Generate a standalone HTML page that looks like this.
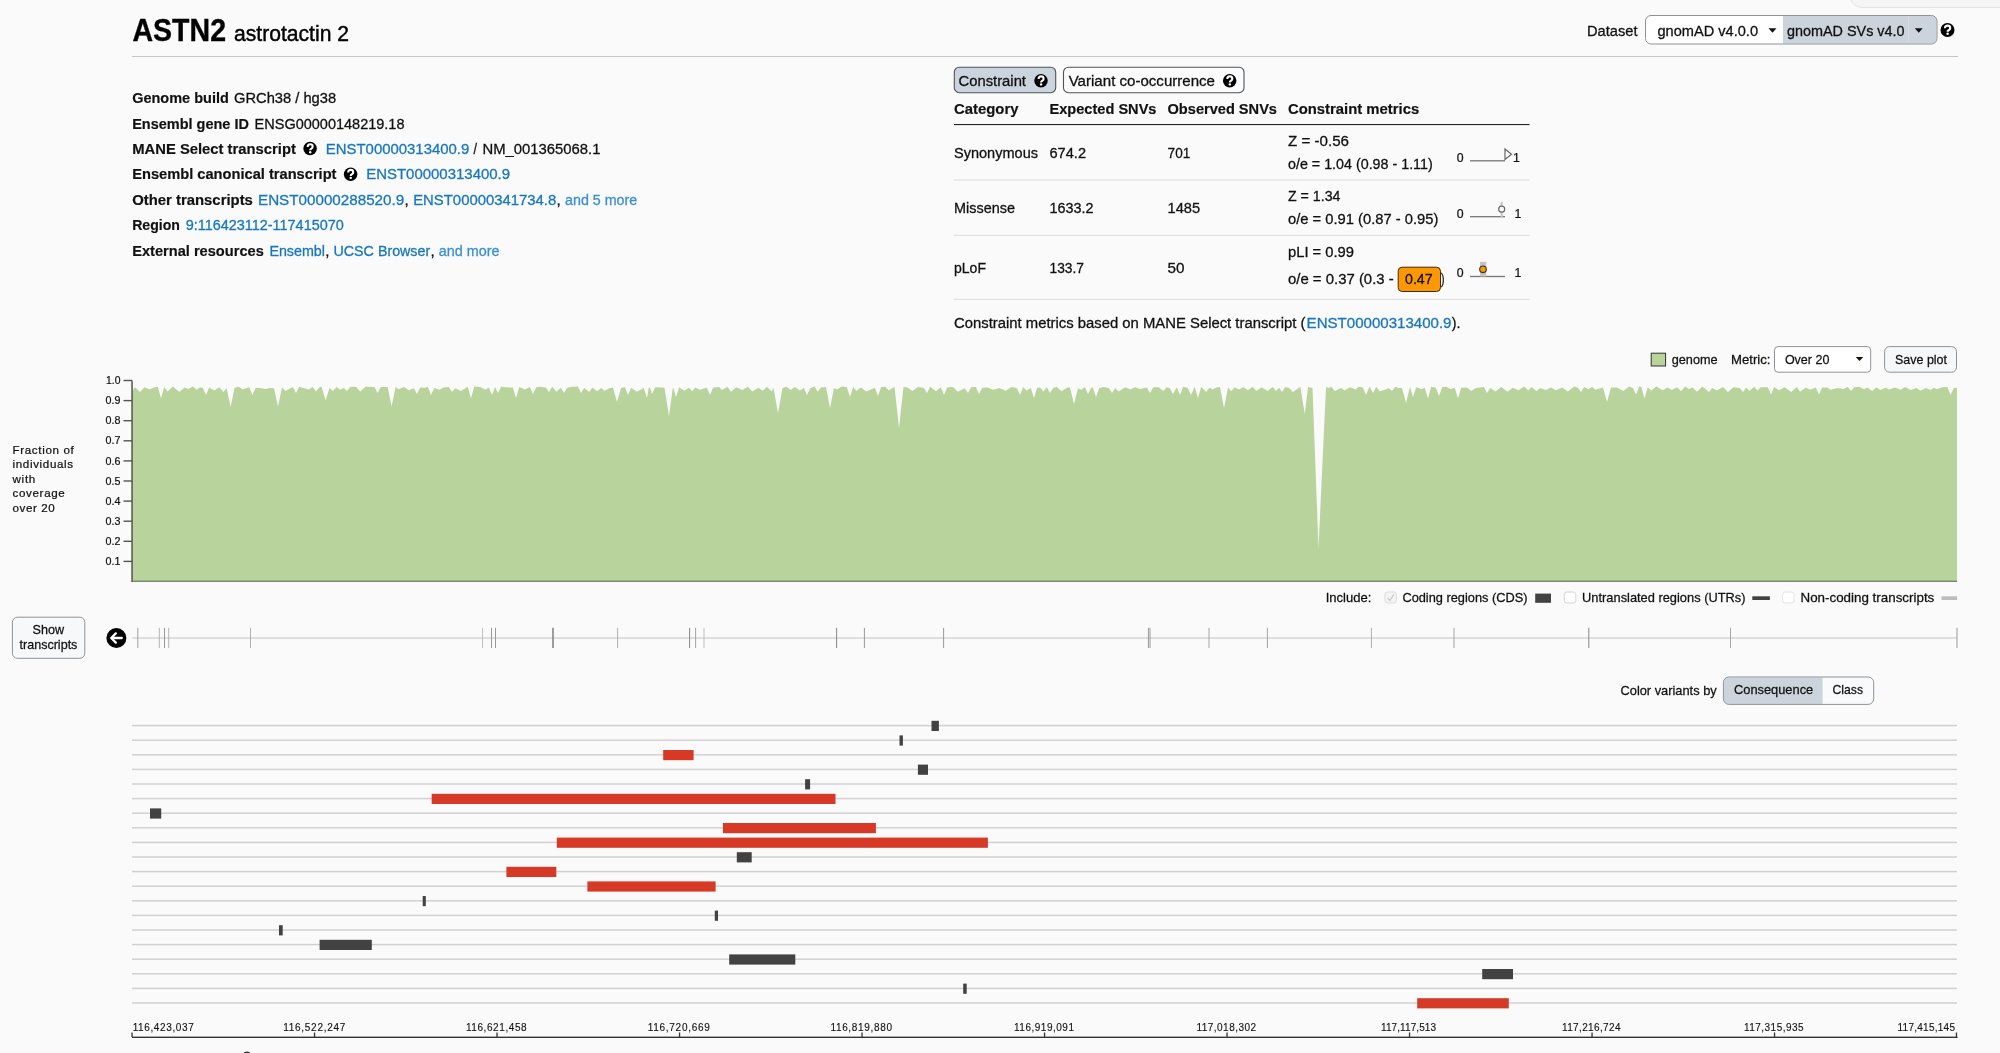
<!DOCTYPE html><html><head><meta charset="utf-8"><style>html,body{margin:0;padding:0;background:#fafafa;overflow:hidden;}svg{display:block;will-change:transform;}</style></head><body>
<svg width="2000" height="1053" viewBox="0 0 2000 1053" font-family='"Liberation Sans", sans-serif'>
<rect x="0" y="0" width="2000" height="1053" fill="#fafafa"/>
<rect x="1850" y="-30" width="200" height="37.5" rx="12" fill="#f5f5f5" stroke="#e4e4e4" stroke-width="1"/>
<text x="132.50" y="41.00" font-size="30.5" fill="#000" font-weight="bold" stroke="#000" stroke-width="0.361" textLength="93.50" lengthAdjust="spacingAndGlyphs">ASTN2</text>
<text x="234.00" y="41.00" font-size="22" fill="#000" stroke="#000" stroke-width="0.434" textLength="115.00" lengthAdjust="spacingAndGlyphs">astrotactin 2</text>
<rect x="132" y="56" width="1826" height="1" fill="#c6c6c6"/>
<text x="1587.00" y="36.25" font-size="15.2" fill="#111" stroke="#111" stroke-width="0.300" textLength="50.50" lengthAdjust="spacingAndGlyphs">Dataset</text>
<rect x="1645.5" y="15.5" width="291.5" height="28.5" rx="5.5" fill="#fff"/>
<path d="M1783,16 L1931.5,16 Q1936.5,16 1936.5,21 L1936.5,38.5 Q1936.5,43.5 1931.5,43.5 L1783,43.5 Z" fill="#cbd3dc"/>
<rect x="1908" y="16" width="1" height="27.5" fill="#d5dbe1"/>
<rect x="1645.5" y="15.5" width="291.5" height="28.5" rx="5.5" fill="none" stroke="#8e9398" stroke-width="1"/>
<text x="1657.50" y="36.25" font-size="15.2" fill="#111" stroke="#111" stroke-width="0.300" textLength="100.50" lengthAdjust="spacingAndGlyphs">gnomAD v4.0.0</text>
<path d="M1768.5,28.25 L1776.5,28.25 L1772.5,32.75 Z" fill="#111"/>
<text x="1787.00" y="36.25" font-size="15.2" fill="#111" stroke="#111" stroke-width="0.300" textLength="117.50" lengthAdjust="spacingAndGlyphs">gnomAD SVs v4.0</text>
<path d="M1914.75,28.25 L1922.75,28.25 L1918.75,32.75 Z" fill="#111"/>
<circle cx="1947.5" cy="30" r="7" fill="#000"/>
<path transform="translate(1947.5,30) scale(1.037)" d="M-2.4,-1.6 Q-2.4,-4.3 0.1,-4.3 Q2.6,-4.3 2.6,-2.0 Q2.6,-0.7 1.1,0.2 Q0.1,0.8 0.1,1.7" fill="none" stroke="#fff" stroke-width="2.1" stroke-linecap="butt"/>
<circle cx="1947.60" cy="33.84" r="1.24" fill="#fff"/>
<text x="132.20" y="102.90" font-size="15.2" fill="#111" font-weight="bold" stroke="#111" stroke-width="0.180" textLength="96.60" lengthAdjust="spacingAndGlyphs">Genome build</text>
<text x="234.10" y="102.90" font-size="15.2" fill="#111" stroke="#111" stroke-width="0.300" textLength="102.00" lengthAdjust="spacingAndGlyphs">GRCh38 / hg38</text>
<text x="132.20" y="128.60" font-size="15.2" fill="#111" font-weight="bold" stroke="#111" stroke-width="0.180" textLength="116.70" lengthAdjust="spacingAndGlyphs">Ensembl gene ID</text>
<text x="254.60" y="128.60" font-size="15.2" fill="#111" stroke="#111" stroke-width="0.300" textLength="149.90" lengthAdjust="spacingAndGlyphs">ENSG00000148219.18</text>
<text x="132.20" y="153.70" font-size="15.2" fill="#111" font-weight="bold" stroke="#111" stroke-width="0.180" textLength="163.70" lengthAdjust="spacingAndGlyphs">MANE Select transcript</text>
<circle cx="310.1" cy="148.6" r="6.75" fill="#000"/>
<path transform="translate(310.1,148.6) scale(1.000)" d="M-2.4,-1.6 Q-2.4,-4.3 0.1,-4.3 Q2.6,-4.3 2.6,-2.0 Q2.6,-0.7 1.1,0.2 Q0.1,0.8 0.1,1.7" fill="none" stroke="#fff" stroke-width="2.1" stroke-linecap="butt"/>
<circle cx="310.20" cy="152.30" r="1.20" fill="#fff"/>
<text x="325.80" y="153.70" font-size="15.2" fill="#1777c0" stroke="#1777c0" stroke-width="0.300" textLength="143.50" lengthAdjust="spacingAndGlyphs">ENST00000313400.9</text>
<text x="473.50" y="153.70" font-size="15.2" fill="#111" stroke="#111" stroke-width="0.300" textLength="3.50" lengthAdjust="spacingAndGlyphs">/</text>
<text x="482.50" y="153.70" font-size="15.2" fill="#111" stroke="#111" stroke-width="0.300" textLength="118.00" lengthAdjust="spacingAndGlyphs">NM_001365068.1</text>
<text x="132.20" y="179.40" font-size="15.2" fill="#111" font-weight="bold" stroke="#111" stroke-width="0.180" textLength="204.30" lengthAdjust="spacingAndGlyphs">Ensembl canonical transcript</text>
<circle cx="350.6" cy="174.2" r="6.75" fill="#000"/>
<path transform="translate(350.6,174.2) scale(1.000)" d="M-2.4,-1.6 Q-2.4,-4.3 0.1,-4.3 Q2.6,-4.3 2.6,-2.0 Q2.6,-0.7 1.1,0.2 Q0.1,0.8 0.1,1.7" fill="none" stroke="#fff" stroke-width="2.1" stroke-linecap="butt"/>
<circle cx="350.70" cy="177.90" r="1.20" fill="#fff"/>
<text x="366.20" y="179.40" font-size="15.2" fill="#1777c0" stroke="#1777c0" stroke-width="0.300" textLength="143.90" lengthAdjust="spacingAndGlyphs">ENST00000313400.9</text>
<text x="132.20" y="204.80" font-size="15.2" fill="#111" font-weight="bold" stroke="#111" stroke-width="0.180" textLength="120.70" lengthAdjust="spacingAndGlyphs">Other transcripts</text>
<text x="258.00" y="204.80" font-size="15.2" fill="#1777c0" stroke="#1777c0" stroke-width="0.300" textLength="146.20" lengthAdjust="spacingAndGlyphs">ENST00000288520.9</text>
<text x="404.60" y="204.80" font-size="15.2" fill="#111" stroke="#111" stroke-width="0.300">,</text>
<text x="413.20" y="204.80" font-size="15.2" fill="#1777c0" stroke="#1777c0" stroke-width="0.300" textLength="143.10" lengthAdjust="spacingAndGlyphs">ENST00000341734.8</text>
<text x="556.60" y="204.80" font-size="15.2" fill="#111" stroke="#111" stroke-width="0.300">,</text>
<text x="565.00" y="204.80" font-size="15.2" fill="#3a8fd6" stroke="#3a8fd6" stroke-width="0.300" textLength="72.20" lengthAdjust="spacingAndGlyphs">and 5 more</text>
<text x="132.20" y="230.00" font-size="15.2" fill="#111" font-weight="bold" stroke="#111" stroke-width="0.180" textLength="47.80" lengthAdjust="spacingAndGlyphs">Region</text>
<text x="185.70" y="230.00" font-size="15.2" fill="#1777c0" stroke="#1777c0" stroke-width="0.300" textLength="158.10" lengthAdjust="spacingAndGlyphs">9:116423112-117415070</text>
<text x="132.20" y="255.60" font-size="15.2" fill="#111" font-weight="bold" stroke="#111" stroke-width="0.180" textLength="131.60" lengthAdjust="spacingAndGlyphs">External resources</text>
<text x="269.40" y="255.60" font-size="15.2" fill="#1777c0" stroke="#1777c0" stroke-width="0.300" textLength="55.60" lengthAdjust="spacingAndGlyphs">Ensembl</text>
<text x="325.30" y="255.60" font-size="15.2" fill="#111" stroke="#111" stroke-width="0.300">,</text>
<text x="333.50" y="255.60" font-size="15.2" fill="#1777c0" stroke="#1777c0" stroke-width="0.300" textLength="96.70" lengthAdjust="spacingAndGlyphs">UCSC Browser</text>
<text x="430.50" y="255.60" font-size="15.2" fill="#111" stroke="#111" stroke-width="0.300">,</text>
<text x="438.80" y="255.60" font-size="15.2" fill="#3a8fd6" stroke="#3a8fd6" stroke-width="0.300" textLength="60.70" lengthAdjust="spacingAndGlyphs">and more</text>
<rect x="954.3" y="67.2" width="101.4" height="25.5" rx="5" fill="#cbd3dc" stroke="#4d5358" stroke-width="1.1"/>
<text x="958.50" y="85.80" font-size="15.2" fill="#111" stroke="#111" stroke-width="0.300" textLength="67.50" lengthAdjust="spacingAndGlyphs">Constraint</text>
<circle cx="1041" cy="80.7" r="6.75" fill="#000"/>
<path transform="translate(1041,80.7) scale(1.000)" d="M-2.4,-1.6 Q-2.4,-4.3 0.1,-4.3 Q2.6,-4.3 2.6,-2.0 Q2.6,-0.7 1.1,0.2 Q0.1,0.8 0.1,1.7" fill="none" stroke="#fff" stroke-width="2.1" stroke-linecap="butt"/>
<circle cx="1041.10" cy="84.40" r="1.20" fill="#fff"/>
<rect x="1063.5" y="67.2" width="180.5" height="25.5" rx="5" fill="#fbfbfb" stroke="#4d5358" stroke-width="1.1"/>
<text x="1068.70" y="85.80" font-size="15.2" fill="#111" stroke="#111" stroke-width="0.300" textLength="146.30" lengthAdjust="spacingAndGlyphs">Variant co-occurrence</text>
<circle cx="1229.7" cy="80.7" r="6.75" fill="#000"/>
<path transform="translate(1229.7,80.7) scale(1.000)" d="M-2.4,-1.6 Q-2.4,-4.3 0.1,-4.3 Q2.6,-4.3 2.6,-2.0 Q2.6,-0.7 1.1,0.2 Q0.1,0.8 0.1,1.7" fill="none" stroke="#fff" stroke-width="2.1" stroke-linecap="butt"/>
<circle cx="1229.80" cy="84.40" r="1.20" fill="#fff"/>
<text x="954.00" y="113.70" font-size="15.2" fill="#111" font-weight="bold" stroke="#111" stroke-width="0.180" textLength="64.50" lengthAdjust="spacingAndGlyphs">Category</text>
<text x="1049.50" y="113.70" font-size="15.2" fill="#111" font-weight="bold" stroke="#111" stroke-width="0.180" textLength="107.00" lengthAdjust="spacingAndGlyphs">Expected SNVs</text>
<text x="1167.50" y="113.70" font-size="15.2" fill="#111" font-weight="bold" stroke="#111" stroke-width="0.180" textLength="109.50" lengthAdjust="spacingAndGlyphs">Observed SNVs</text>
<text x="1288.00" y="113.70" font-size="15.2" fill="#111" font-weight="bold" stroke="#111" stroke-width="0.180" textLength="131.20" lengthAdjust="spacingAndGlyphs">Constraint metrics</text>
<rect x="954" y="124" width="575.5" height="1.1" fill="#222"/>
<text x="954.00" y="157.50" font-size="15.2" fill="#111" stroke="#111" stroke-width="0.300" textLength="84.00" lengthAdjust="spacingAndGlyphs">Synonymous</text>
<text x="1049.50" y="157.50" font-size="15.2" fill="#111" stroke="#111" stroke-width="0.300" textLength="36.50" lengthAdjust="spacingAndGlyphs">674.2</text>
<text x="1167.60" y="157.50" font-size="15.2" fill="#111" stroke="#111" stroke-width="0.300" textLength="22.60" lengthAdjust="spacingAndGlyphs">701</text>
<text x="1288.00" y="145.50" font-size="15.2" fill="#111" stroke="#111" stroke-width="0.300" textLength="61.00" lengthAdjust="spacingAndGlyphs">Z = -0.56</text>
<text x="1288.00" y="169.20" font-size="15.2" fill="#111" stroke="#111" stroke-width="0.300" textLength="144.70" lengthAdjust="spacingAndGlyphs">o/e = 1.04 (0.98 - 1.11)</text>
<text x="1456.70" y="161.70" font-size="12.3" fill="#111" stroke="#111" stroke-width="0.243" textLength="6.60" lengthAdjust="spacing">0</text>
<rect x="1470" y="160.15" width="35" height="1.3" fill="#777"/>
<text x="1513.00" y="161.70" font-size="12.3" fill="#111" stroke="#111" stroke-width="0.243" textLength="5.00" lengthAdjust="spacing">1</text>
<path d="M1505,149 L1511.5,154.3 L1505,159.5 Z" fill="#fafafa" stroke="#666" stroke-width="1.2"/>
<rect x="954" y="179.5" width="575.5" height="1" fill="#dadada"/>
<text x="954.00" y="213.00" font-size="15.2" fill="#111" stroke="#111" stroke-width="0.300" textLength="61.00" lengthAdjust="spacingAndGlyphs">Missense</text>
<text x="1049.50" y="213.00" font-size="15.2" fill="#111" stroke="#111" stroke-width="0.300" textLength="44.10" lengthAdjust="spacingAndGlyphs">1633.2</text>
<text x="1167.50" y="213.00" font-size="15.2" fill="#111" stroke="#111" stroke-width="0.300" textLength="32.60" lengthAdjust="spacingAndGlyphs">1485</text>
<text x="1288.00" y="200.70" font-size="15.2" fill="#111" stroke="#111" stroke-width="0.300" textLength="52.50" lengthAdjust="spacingAndGlyphs">Z = 1.34</text>
<text x="1288.00" y="224.20" font-size="15.2" fill="#111" stroke="#111" stroke-width="0.300" textLength="150.30" lengthAdjust="spacingAndGlyphs">o/e = 0.91 (0.87 - 0.95)</text>
<text x="1456.70" y="217.50" font-size="12.3" fill="#111" stroke="#111" stroke-width="0.243" textLength="6.60" lengthAdjust="spacing">0</text>
<rect x="1470" y="216.04999999999998" width="35" height="1.3" fill="#777"/>
<text x="1514.50" y="217.50" font-size="12.3" fill="#111" stroke="#111" stroke-width="0.243" textLength="5.00" lengthAdjust="spacing">1</text>
<rect x="1500.7" y="201.7" width="2" height="15.5" fill="#c4c4c4"/>
<circle cx="1501.7" cy="209.2" r="3" fill="#fafafa" stroke="#666" stroke-width="1.2"/>
<rect x="954" y="234.8" width="575.5" height="1" fill="#dadada"/>
<text x="954.00" y="273.00" font-size="15.2" fill="#111" stroke="#111" stroke-width="0.300" textLength="32.00" lengthAdjust="spacingAndGlyphs">pLoF</text>
<text x="1049.50" y="273.00" font-size="15.2" fill="#111" stroke="#111" stroke-width="0.300" textLength="34.50" lengthAdjust="spacingAndGlyphs">133.7</text>
<text x="1167.50" y="273.00" font-size="15.2" fill="#111" stroke="#111" stroke-width="0.300" textLength="17.00" lengthAdjust="spacingAndGlyphs">50</text>
<text x="1288.00" y="256.70" font-size="15.2" fill="#111" stroke="#111" stroke-width="0.300" textLength="66.00" lengthAdjust="spacingAndGlyphs">pLI = 0.99</text>
<text x="1288.00" y="284.30" font-size="15.2" fill="#111" stroke="#111" stroke-width="0.300" textLength="105.70" lengthAdjust="spacingAndGlyphs">o/e = 0.37 (0.3 -</text>
<rect x="1398.2" y="267.2" width="42.3" height="24.3" rx="4" fill="#ff9800" stroke="#3a2a10" stroke-width="1"/>
<text x="1405.00" y="284.30" font-size="15.2" fill="#111" stroke="#111" stroke-width="0.300" textLength="27.70" lengthAdjust="spacingAndGlyphs">0.47</text>
<text x="1441.00" y="284.30" font-size="15.2" fill="#111" stroke="#111" stroke-width="0.300" textLength="3.50" lengthAdjust="spacingAndGlyphs">)</text>
<text x="1456.70" y="277.25" font-size="12.3" fill="#111" stroke="#111" stroke-width="0.243" textLength="6.60" lengthAdjust="spacing">0</text>
<rect x="1470" y="275.85" width="35" height="1.3" fill="#777"/>
<text x="1514.50" y="277.25" font-size="12.3" fill="#111" stroke="#111" stroke-width="0.243" textLength="5.00" lengthAdjust="spacing">1</text>
<rect x="1480" y="261.8" width="6.3" height="14.7" fill="#c4c4c4"/>
<circle cx="1483" cy="269.3" r="3.3" fill="#ff9800" stroke="#333" stroke-width="1.1"/>
<rect x="954" y="298.8" width="575.5" height="1" fill="#dadada"/>
<text x="954.00" y="327.50" font-size="15.2" fill="#111" stroke="#111" stroke-width="0.300" textLength="351.50" lengthAdjust="spacingAndGlyphs">Constraint metrics based on MANE Select transcript (</text>
<text x="1306.60" y="327.50" font-size="15.2" fill="#1777c0" stroke="#1777c0" stroke-width="0.300" textLength="144.90" lengthAdjust="spacingAndGlyphs">ENST00000313400.9</text>
<text x="1451.80" y="327.50" font-size="15.2" fill="#111" stroke="#111" stroke-width="0.300" textLength="8.70" lengthAdjust="spacingAndGlyphs">).</text>
<rect x="1651.2" y="353.2" width="14.4" height="12.8" fill="#b8d39c" stroke="#333" stroke-width="1"/>
<text x="1671.70" y="364.40" font-size="13" fill="#111" stroke="#111" stroke-width="0.257" textLength="45.90" lengthAdjust="spacingAndGlyphs">genome</text>
<text x="1731.00" y="364.40" font-size="13" fill="#111" stroke="#111" stroke-width="0.257" textLength="39.40" lengthAdjust="spacingAndGlyphs">Metric:</text>
<rect x="1774.5" y="346.6" width="96.2" height="25.6" rx="3.5" fill="#fff" stroke="#8e9398" stroke-width="1"/>
<text x="1784.90" y="364.00" font-size="13" fill="#111" stroke="#111" stroke-width="0.257" textLength="44.50" lengthAdjust="spacingAndGlyphs">Over 20</text>
<path d="M1855.75,357.0 L1863.25,357.0 L1859.5,361.0 Z" fill="#111"/>
<rect x="1884.6" y="346.6" width="71.9" height="25.6" rx="5" fill="#f6f7f8" stroke="#8e9398" stroke-width="1"/>
<text x="1895.00" y="364.00" font-size="13" fill="#111" stroke="#111" stroke-width="0.257" textLength="52.00" lengthAdjust="spacingAndGlyphs">Save plot</text>
<path d="M132,581.5 L132.0,391.0 L135.0,387.2 L140.0,391.9 L144.6,387.3 L149.6,389.6 L154.4,387.4 L157.8,386.7 L161.0,398.6 L164.2,387.0 L167.5,391.5 L172.9,386.6 L179.3,392.0 L184.6,387.4 L188.2,389.0 L193.0,386.6 L196.7,389.8 L199.8,387.2 L202.8,388.0 L206.0,395.0 L209.2,387.4 L214.1,390.5 L219.4,387.2 L223.4,392.1 L226.6,388.0 L230.6,407.0 L234.6,387.8 L238.5,386.8 L242.6,389.2 L249.2,387.2 L252.4,395.0 L255.6,388.0 L259.8,387.9 L265.7,389.0 L269.5,387.9 L274.0,388.3 L278.0,406.6 L282.0,387.2 L285.2,391.0 L292.8,387.0 L296.0,393.0 L299.2,386.7 L303.2,387.9 L308.9,389.4 L312.7,386.7 L315.9,391.5 L319.5,387.3 L321.6,386.8 L325.6,400.6 L329.6,387.8 L333.0,391.0 L336.4,387.1 L340.1,389.8 L343.8,387.9 L347.0,391.0 L350.2,387.0 L355.9,386.8 L360.2,391.6 L365.5,386.7 L374.4,386.9 L377.6,393.0 L380.8,387.0 L387.6,387.1 L391.6,406.6 L395.6,387.0 L398.8,389.3 L403.9,386.9 L409.0,390.2 L413.8,388.2 L417.0,394.0 L420.2,387.4 L424.9,387.8 L427.8,386.8 L431.0,395.0 L434.2,388.1 L439.7,389.8 L443.3,387.6 L448.8,386.9 L452.0,392.0 L455.2,388.2 L460.8,390.9 L467.8,386.7 L471.0,398.6 L474.2,386.6 L480.1,386.9 L485.6,389.8 L488.8,387.6 L492.0,395.0 L494.8,387.8 L495.2,387.0 L498.0,393.0 L501.2,386.6 L504.9,387.3 L512.8,387.6 L516.0,398.0 L519.2,387.0 L525.0,389.6 L529.8,387.0 L533.0,394.0 L536.2,387.3 L539.4,386.8 L545.8,387.5 L549.0,392.0 L552.2,386.7 L556.3,391.8 L560.8,387.7 L564.0,393.0 L567.2,387.7 L572.0,386.7 L577.8,386.5 L581.0,393.0 L584.2,388.1 L589.3,392.0 L592.4,387.5 L597.1,391.3 L601.2,388.0 L604.4,390.7 L610.0,387.9 L613.0,387.8 L617.0,402.0 L621.0,387.9 L624.8,387.1 L628.0,395.0 L631.2,387.7 L636.9,391.7 L643.8,387.9 L647.0,398.0 L648.8,387.6 L650.2,388.1 L652.0,394.0 L655.2,387.2 L659.9,387.4 L664.5,387.7 L669.0,416.0 L672.8,387.8 L673.5,388.3 L676.0,397.0 L679.2,387.2 L684.4,390.8 L688.9,387.8 L692.2,391.3 L695.3,387.4 L700.0,389.7 L706.8,387.4 L710.0,395.0 L713.2,387.6 L719.0,386.9 L722.0,389.9 L727.4,386.8 L731.0,391.8 L736.3,387.2 L742.4,390.0 L747.7,386.8 L752.2,391.5 L758.4,387.8 L762.8,390.8 L766.9,386.7 L771.6,391.6 L773.5,387.8 L778.0,413.0 L782.5,388.2 L786.3,386.8 L790.9,389.9 L794.7,387.1 L799.8,390.5 L803.8,388.0 L807.0,395.0 L810.2,388.3 L814.6,386.6 L817.7,391.7 L820.8,387.6 L826.0,387.1 L830.0,408.0 L834.0,387.9 L837.1,389.4 L841.6,386.5 L846.8,386.9 L850.0,397.0 L853.2,386.8 L856.3,391.0 L860.9,387.4 L866.2,391.5 L874.8,387.7 L878.0,396.0 L881.2,386.9 L885.6,386.8 L888.7,390.5 L894.5,386.8 L899.0,428.0 L903.5,387.0 L907.5,387.5 L912.4,390.9 L918.0,387.1 L923.8,388.1 L927.0,393.0 L930.2,386.7 L936.0,391.2 L940.8,387.3 L944.0,395.0 L947.2,387.6 L952.9,387.1 L957.9,391.7 L964.8,388.2 L968.0,393.0 L971.2,387.3 L975.8,386.9 L979.0,394.0 L982.2,387.8 L987.7,387.5 L993.2,389.7 L999.3,388.0 L1005.7,390.7 L1011.5,387.0 L1016.8,388.0 L1020.0,395.0 L1023.2,387.1 L1026.4,390.4 L1030.8,387.9 L1034.0,398.0 L1037.2,387.4 L1040.3,387.7 L1043.5,391.5 L1046.8,387.1 L1050.0,393.0 L1053.2,387.9 L1056.6,386.7 L1061.4,391.2 L1067.4,387.5 L1070.0,387.4 L1074.0,404.0 L1078.0,388.2 L1081.3,389.7 L1084.8,387.0 L1088.0,394.0 L1091.2,387.8 L1092.8,387.4 L1096.0,397.0 L1099.2,388.0 L1103.9,387.0 L1108.8,388.0 L1112.0,393.0 L1115.2,388.1 L1118.8,391.6 L1125.2,387.3 L1130.2,389.6 L1135.1,387.3 L1140.2,389.1 L1146.8,387.4 L1150.0,393.0 L1153.2,387.2 L1158.6,387.3 L1163.3,391.1 L1166.6,387.3 L1169.8,388.2 L1173.0,394.0 L1176.2,388.2 L1176.8,387.4 L1180.0,395.0 L1183.2,386.7 L1187.8,388.0 L1191.0,395.0 L1194.2,388.1 L1194.8,387.1 L1198.0,398.0 L1201.2,386.8 L1206.1,391.9 L1209.5,387.7 L1212.6,389.6 L1216.4,387.5 L1220.0,387.1 L1224.0,408.0 L1228.0,387.6 L1231.3,391.3 L1234.7,387.3 L1238.6,389.6 L1243.5,387.2 L1247.8,390.3 L1252.6,386.7 L1256.4,391.0 L1261.6,387.3 L1267.6,390.9 L1272.8,386.9 L1276.0,391.0 L1278.8,388.1 L1279.2,387.8 L1282.0,392.0 L1285.2,387.1 L1289.1,387.9 L1292.9,392.1 L1300.3,386.7 L1304.8,414.0 L1308.0,387.0 L1312.5,388.0 L1318.5,548.0 L1326.0,387.0 L1329.0,388.0 L1331.1,386.5 L1334.8,391.1 L1341.0,388.0 L1344.4,390.6 L1350.1,387.3 L1355.5,389.6 L1358.7,386.7 L1362.8,387.5 L1366.0,395.0 L1369.2,387.4 L1369.8,386.8 L1373.0,393.0 L1376.2,386.8 L1379.8,391.6 L1388.8,388.2 L1392.0,391.0 L1395.2,386.7 L1398.4,387.9 L1402.0,387.9 L1406.0,403.0 L1409.8,387.4 L1410.0,387.1 L1413.0,397.0 L1416.2,387.3 L1421.0,389.0 L1424.8,388.0 L1428.0,398.6 L1431.2,386.8 L1435.8,387.8 L1439.0,396.0 L1442.2,387.2 L1445.8,386.7 L1450.6,389.0 L1454.8,387.9 L1458.0,398.6 L1461.2,387.8 L1466.8,387.4 L1471.2,390.9 L1476.0,388.0 L1483.8,387.0 L1487.0,393.0 L1490.2,388.1 L1495.4,391.4 L1501.3,387.1 L1507.4,391.7 L1512.9,387.7 L1518.5,390.3 L1524.1,386.6 L1528.3,390.5 L1531.3,387.0 L1536.5,390.9 L1540.3,387.9 L1545.7,390.0 L1551.0,387.4 L1555.8,390.2 L1562.3,387.5 L1567.8,391.4 L1574.2,386.5 L1577.8,387.8 L1581.0,392.0 L1584.2,387.0 L1588.4,389.2 L1592.1,387.1 L1595.4,389.8 L1603.0,387.5 L1607.0,402.0 L1611.0,387.4 L1616.9,387.4 L1623.4,391.0 L1629.2,386.6 L1632.8,387.9 L1636.0,394.5 L1639.2,386.6 L1641.3,386.8 L1644.5,398.5 L1647.7,387.3 L1651.2,390.5 L1656.3,386.6 L1662.7,390.3 L1667.5,387.4 L1671.8,389.9 L1677.1,387.3 L1681.1,391.2 L1685.1,386.5 L1689.0,389.1 L1692.5,387.6 L1696.9,391.8 L1702.5,386.6 L1708.9,391.9 L1712.2,387.9 L1716.7,390.5 L1723.1,386.9 L1727.9,391.9 L1733.5,387.2 L1739.8,388.0 L1743.0,392.0 L1746.2,387.6 L1749.5,390.9 L1754.1,386.8 L1757.3,390.6 L1760.8,387.2 L1767.8,387.3 L1771.0,394.6 L1774.2,387.0 L1778.9,390.3 L1784.7,387.3 L1791.2,392.0 L1796.7,386.9 L1800.1,391.8 L1805.9,387.4 L1810.1,389.8 L1815.8,387.5 L1819.0,394.6 L1822.2,387.6 L1827.1,387.6 L1830.8,389.8 L1837.2,387.9 L1843.3,389.1 L1847.8,387.0 L1851.0,391.0 L1854.2,387.3 L1859.1,386.7 L1864.0,389.2 L1867.3,387.5 L1872.2,391.0 L1876.5,387.2 L1880.2,390.1 L1885.8,387.8 L1889.1,389.4 L1894.9,387.4 L1900.6,389.7 L1905.1,386.9 L1910.9,390.1 L1916.2,388.0 L1920.4,390.7 L1926.0,387.9 L1930.5,390.1 L1933.8,387.8 L1937.1,389.3 L1942.1,387.2 L1947.4,387.0 L1950.6,395.0 L1953.8,387.9 L1957.0,387.7 L1957,581.5 Z" fill="#b8d39c"/>
<rect x="132" y="580.6" width="1825" height="1.3" fill="#6f8060"/>
<rect x="131.3" y="380.5" width="1.5" height="201.5" fill="#555"/>
<rect x="123.5" y="560.70" width="8.5" height="1.4" fill="#555"/>
<text x="105.50" y="565.00" font-size="10.6" fill="#111" stroke="#111" stroke-width="0.209" textLength="14.90" lengthAdjust="spacingAndGlyphs">0.1</text>
<rect x="123.5" y="540.60" width="8.5" height="1.4" fill="#555"/>
<text x="105.50" y="544.90" font-size="10.6" fill="#111" stroke="#111" stroke-width="0.209" textLength="14.90" lengthAdjust="spacingAndGlyphs">0.2</text>
<rect x="123.5" y="520.50" width="8.5" height="1.4" fill="#555"/>
<text x="105.50" y="524.80" font-size="10.6" fill="#111" stroke="#111" stroke-width="0.209" textLength="14.90" lengthAdjust="spacingAndGlyphs">0.3</text>
<rect x="123.5" y="500.40" width="8.5" height="1.4" fill="#555"/>
<text x="105.50" y="504.70" font-size="10.6" fill="#111" stroke="#111" stroke-width="0.209" textLength="14.90" lengthAdjust="spacingAndGlyphs">0.4</text>
<rect x="123.5" y="480.30" width="8.5" height="1.4" fill="#555"/>
<text x="105.50" y="484.60" font-size="10.6" fill="#111" stroke="#111" stroke-width="0.209" textLength="14.90" lengthAdjust="spacingAndGlyphs">0.5</text>
<rect x="123.5" y="460.20" width="8.5" height="1.4" fill="#555"/>
<text x="105.50" y="464.50" font-size="10.6" fill="#111" stroke="#111" stroke-width="0.209" textLength="14.90" lengthAdjust="spacingAndGlyphs">0.6</text>
<rect x="123.5" y="440.10" width="8.5" height="1.4" fill="#555"/>
<text x="105.50" y="444.40" font-size="10.6" fill="#111" stroke="#111" stroke-width="0.209" textLength="14.90" lengthAdjust="spacingAndGlyphs">0.7</text>
<rect x="123.5" y="420.00" width="8.5" height="1.4" fill="#555"/>
<text x="105.50" y="424.30" font-size="10.6" fill="#111" stroke="#111" stroke-width="0.209" textLength="14.90" lengthAdjust="spacingAndGlyphs">0.8</text>
<rect x="123.5" y="399.90" width="8.5" height="1.4" fill="#555"/>
<text x="105.50" y="404.20" font-size="10.6" fill="#111" stroke="#111" stroke-width="0.209" textLength="14.90" lengthAdjust="spacingAndGlyphs">0.9</text>
<rect x="123.5" y="379.80" width="8.5" height="1.4" fill="#555"/>
<text x="106.00" y="384.10" font-size="10.6" fill="#111" stroke="#111" stroke-width="0.209" textLength="14.40" lengthAdjust="spacingAndGlyphs">1.0</text>
<text x="12.50" y="453.75" font-size="11.6" fill="#111" stroke="#111" stroke-width="0.229" textLength="61.30" lengthAdjust="spacing">Fraction of</text>
<text x="12.50" y="468.25" font-size="11.6" fill="#111" stroke="#111" stroke-width="0.229" textLength="60.60" lengthAdjust="spacing">individuals</text>
<text x="12.50" y="482.75" font-size="11.6" fill="#111" stroke="#111" stroke-width="0.229" textLength="22.80" lengthAdjust="spacing">with</text>
<text x="12.50" y="497.25" font-size="11.6" fill="#111" stroke="#111" stroke-width="0.229" textLength="52.30" lengthAdjust="spacing">coverage</text>
<text x="12.50" y="511.75" font-size="11.6" fill="#111" stroke="#111" stroke-width="0.229" textLength="42.30" lengthAdjust="spacing">over 20</text>
<text x="1325.70" y="601.80" font-size="13" fill="#111" stroke="#111" stroke-width="0.257" textLength="45.70" lengthAdjust="spacingAndGlyphs">Include:</text>
<rect x="1384.8" y="592" width="11.5" height="11" rx="2.5" fill="#f3f3f3" stroke="#dedede" stroke-width="1"/>
<path d="M1387.5,597.8 L1389.8,600.5 L1393.8,594.6" fill="none" stroke="#c9c9c9" stroke-width="1.2"/>
<text x="1402.40" y="601.80" font-size="13" fill="#111" stroke="#111" stroke-width="0.257" textLength="125.10" lengthAdjust="spacingAndGlyphs">Coding regions (CDS)</text>
<rect x="1535.2" y="593.6" width="15.8" height="9.2" fill="#424242"/>
<rect x="1564.3" y="592" width="11.5" height="11" rx="2.5" fill="#fff" stroke="#d4d4d4" stroke-width="1"/>
<text x="1582.10" y="601.80" font-size="13" fill="#111" stroke="#111" stroke-width="0.257" textLength="163.40" lengthAdjust="spacingAndGlyphs">Untranslated regions (UTRs)</text>
<rect x="1752.3" y="596.3" width="17.6" height="3.7" fill="#424242"/>
<rect x="1782.6" y="592" width="11.5" height="11" rx="2.5" fill="#fff" stroke="#e3e3e3" stroke-width="1"/>
<text x="1800.50" y="601.80" font-size="13" fill="#111" stroke="#111" stroke-width="0.257" textLength="133.80" lengthAdjust="spacingAndGlyphs">Non-coding transcripts</text>
<rect x="1941.5" y="596.3" width="15.6" height="3.7" fill="#bdbdbd"/>
<rect x="12.4" y="617.2" width="72.4" height="41.1" rx="5" fill="#f7f8f9" stroke="#8e9398" stroke-width="1"/>
<text x="32.50" y="634.00" font-size="13" fill="#111" stroke="#111" stroke-width="0.257" textLength="31.50" lengthAdjust="spacingAndGlyphs">Show</text>
<text x="19.50" y="649.20" font-size="13" fill="#111" stroke="#111" stroke-width="0.257" textLength="57.90" lengthAdjust="spacingAndGlyphs">transcripts</text>
<circle cx="116.4" cy="638" r="10" fill="#000"/>
<path d="M121.8,638 L111.3,638 M115.8,633.4 L111.2,638 L115.8,642.6" fill="none" stroke="#fff" stroke-width="2.3" stroke-linecap="round" stroke-linejoin="round"/>
<rect x="132.4" y="637.5" width="1824.6" height="1" fill="#c4c4c4"/>
<rect x="137.30" y="627.8" width="1.0" height="20.2" fill="#a0a0a0"/>
<rect x="158.80" y="627.8" width="1.0" height="20.2" fill="#b5b5b5"/>
<rect x="164.00" y="627.8" width="1.0" height="20.2" fill="#999"/>
<rect x="168.20" y="627.8" width="1.0" height="20.2" fill="#b5b5b5"/>
<rect x="250.00" y="627.8" width="1.0" height="20.2" fill="#b0b0b0"/>
<rect x="482.00" y="627.8" width="1.0" height="20.2" fill="#c0c0c0"/>
<rect x="491.00" y="627.8" width="1.0" height="20.2" fill="#999"/>
<rect x="495.00" y="627.8" width="1.0" height="20.2" fill="#999"/>
<rect x="552.30" y="627.8" width="1.4" height="20.2" fill="#777"/>
<rect x="617.10" y="627.8" width="1.0" height="20.2" fill="#b0b0b0"/>
<rect x="689.10" y="627.8" width="1.0" height="20.2" fill="#888"/>
<rect x="695.10" y="627.8" width="1.0" height="20.2" fill="#a5a5a5"/>
<rect x="703.50" y="627.8" width="1.0" height="20.2" fill="#c0c0c0"/>
<rect x="836.10" y="627.8" width="1.0" height="20.2" fill="#888"/>
<rect x="863.90" y="627.8" width="1.0" height="20.2" fill="#999"/>
<rect x="943.10" y="627.8" width="1.0" height="20.2" fill="#999"/>
<rect x="1147.90" y="627.8" width="1.0" height="20.2" fill="#999"/>
<rect x="1149.50" y="627.8" width="1.0" height="20.2" fill="#999"/>
<rect x="1208.50" y="627.8" width="1.0" height="20.2" fill="#a5a5a5"/>
<rect x="1266.90" y="627.8" width="1.0" height="20.2" fill="#a5a5a5"/>
<rect x="1370.90" y="627.8" width="1.0" height="20.2" fill="#b0b0b0"/>
<rect x="1453.50" y="627.8" width="1.0" height="20.2" fill="#a5a5a5"/>
<rect x="1588.30" y="627.8" width="1.0" height="20.2" fill="#888"/>
<rect x="1730.00" y="627.8" width="1.0" height="20.2" fill="#a5a5a5"/>
<rect x="1956.50" y="627.8" width="1.0" height="20.2" fill="#999"/>
<text x="1620.50" y="695.40" font-size="13" fill="#111" stroke="#111" stroke-width="0.257" textLength="96.20" lengthAdjust="spacingAndGlyphs">Color variants by</text>
<rect x="1723.4" y="677" width="150.3" height="27.4" rx="5.5" fill="#f9fafb"/>
<path d="M1822.6,677.5 L1728.9,677.5 Q1723.9,677.5 1723.9,682.5 L1723.9,698.9 Q1723.9,703.9 1728.9,703.9 L1822.6,703.9 Z" fill="#cbd3dc"/>
<rect x="1723.4" y="677" width="150.3" height="27.4" rx="5.5" fill="none" stroke="#8e9398" stroke-width="1"/>
<text x="1734.00" y="693.60" font-size="13" fill="#111" stroke="#111" stroke-width="0.257" textLength="79.20" lengthAdjust="spacingAndGlyphs">Consequence</text>
<text x="1832.50" y="693.60" font-size="13" fill="#111" stroke="#111" stroke-width="0.257" textLength="30.50" lengthAdjust="spacingAndGlyphs">Class</text>
<rect x="132" y="724.85" width="1825" height="1.5" fill="#d1d1d1"/>
<rect x="132" y="739.45" width="1825" height="1.5" fill="#d1d1d1"/>
<rect x="132" y="754.05" width="1825" height="1.5" fill="#d1d1d1"/>
<rect x="132" y="768.65" width="1825" height="1.5" fill="#d1d1d1"/>
<rect x="132" y="783.25" width="1825" height="1.5" fill="#d1d1d1"/>
<rect x="132" y="797.85" width="1825" height="1.5" fill="#d1d1d1"/>
<rect x="132" y="812.45" width="1825" height="1.5" fill="#d1d1d1"/>
<rect x="132" y="827.05" width="1825" height="1.5" fill="#d1d1d1"/>
<rect x="132" y="841.65" width="1825" height="1.5" fill="#d1d1d1"/>
<rect x="132" y="856.25" width="1825" height="1.5" fill="#d1d1d1"/>
<rect x="132" y="870.85" width="1825" height="1.5" fill="#d1d1d1"/>
<rect x="132" y="885.45" width="1825" height="1.5" fill="#d1d1d1"/>
<rect x="132" y="900.05" width="1825" height="1.5" fill="#d1d1d1"/>
<rect x="132" y="914.65" width="1825" height="1.5" fill="#d1d1d1"/>
<rect x="132" y="929.25" width="1825" height="1.5" fill="#d1d1d1"/>
<rect x="132" y="943.85" width="1825" height="1.5" fill="#d1d1d1"/>
<rect x="132" y="958.45" width="1825" height="1.5" fill="#d1d1d1"/>
<rect x="132" y="973.05" width="1825" height="1.5" fill="#d1d1d1"/>
<rect x="132" y="987.65" width="1825" height="1.5" fill="#d1d1d1"/>
<rect x="132" y="1002.25" width="1825" height="1.5" fill="#d1d1d1"/>
<rect x="931.5" y="720.80" width="7.4" height="10.2" fill="#424242"/>
<rect x="899.5" y="735.40" width="3.4" height="10.2" fill="#424242"/>
<rect x="663.2" y="750.00" width="30.4" height="10.2" fill="#d63a26"/>
<rect x="917.9" y="764.60" width="10.1" height="10.2" fill="#424242"/>
<rect x="805.1" y="779.20" width="5.0" height="10.2" fill="#424242"/>
<rect x="431.7" y="793.80" width="403.8" height="10.2" fill="#d63a26"/>
<rect x="150" y="808.40" width="11.2" height="10.2" fill="#424242"/>
<rect x="722.9" y="823.00" width="153.0" height="10.2" fill="#d63a26"/>
<rect x="556.8" y="837.60" width="431.1" height="10.2" fill="#d63a26"/>
<rect x="736.8" y="852.20" width="14.9" height="10.2" fill="#424242"/>
<rect x="506.4" y="866.80" width="49.9" height="10.2" fill="#d63a26"/>
<rect x="587.4" y="881.40" width="128.2" height="10.2" fill="#d63a26"/>
<rect x="422.7" y="896.00" width="3.1" height="10.2" fill="#424242"/>
<rect x="714.8" y="910.60" width="3.2" height="10.2" fill="#424242"/>
<rect x="279" y="925.20" width="3.7" height="10.2" fill="#424242"/>
<rect x="319.6" y="939.80" width="52.2" height="10.2" fill="#424242"/>
<rect x="729.2" y="954.40" width="66.1" height="10.2" fill="#424242"/>
<rect x="1482.2" y="969.00" width="30.8" height="10.2" fill="#424242"/>
<rect x="963.2" y="983.60" width="3.5" height="10.2" fill="#424242"/>
<rect x="1417.2" y="998.20" width="91.6" height="10.2" fill="#d63a26"/>
<rect x="132" y="1036.6" width="1825.5" height="1.4" fill="#333"/>
<rect x="131.40" y="1032.5" width="1.3" height="4.5" fill="#333"/>
<text x="132.65" y="1030.75" font-size="10.0" fill="#111" stroke="#111" stroke-width="0.120" textLength="61.05" lengthAdjust="spacing">116,423,037</text>
<rect x="313.90" y="1032.5" width="1.3" height="4.5" fill="#333"/>
<text x="283.20" y="1030.75" font-size="10.0" fill="#111" stroke="#111" stroke-width="0.120" textLength="62.10" lengthAdjust="spacing">116,522,247</text>
<rect x="496.40" y="1032.5" width="1.3" height="4.5" fill="#333"/>
<text x="465.90" y="1030.75" font-size="10.0" fill="#111" stroke="#111" stroke-width="0.120" textLength="60.70" lengthAdjust="spacing">116,621,458</text>
<rect x="678.90" y="1032.5" width="1.3" height="4.5" fill="#333"/>
<text x="647.70" y="1030.75" font-size="10.0" fill="#111" stroke="#111" stroke-width="0.120" textLength="62.10" lengthAdjust="spacing">116,720,669</text>
<rect x="861.40" y="1032.5" width="1.3" height="4.5" fill="#333"/>
<text x="830.40" y="1030.75" font-size="10.0" fill="#111" stroke="#111" stroke-width="0.120" textLength="61.60" lengthAdjust="spacing">116,819,880</text>
<rect x="1043.90" y="1032.5" width="1.3" height="4.5" fill="#333"/>
<text x="1014.00" y="1030.75" font-size="10.0" fill="#111" stroke="#111" stroke-width="0.120" textLength="60.00" lengthAdjust="spacing">116,919,091</text>
<rect x="1226.40" y="1032.5" width="1.3" height="4.5" fill="#333"/>
<text x="1196.50" y="1030.75" font-size="10.0" fill="#111" stroke="#111" stroke-width="0.120" textLength="59.50" lengthAdjust="spacing">117,018,302</text>
<rect x="1408.90" y="1032.5" width="1.3" height="4.5" fill="#333"/>
<text x="1381.00" y="1030.75" font-size="10.0" fill="#111" stroke="#111" stroke-width="0.120" textLength="55.00" lengthAdjust="spacing">117,117,513</text>
<rect x="1591.40" y="1032.5" width="1.3" height="4.5" fill="#333"/>
<text x="1562.00" y="1030.75" font-size="10.0" fill="#111" stroke="#111" stroke-width="0.120" textLength="58.50" lengthAdjust="spacing">117,216,724</text>
<rect x="1773.90" y="1032.5" width="1.3" height="4.5" fill="#333"/>
<text x="1744.00" y="1030.75" font-size="10.0" fill="#111" stroke="#111" stroke-width="0.120" textLength="59.50" lengthAdjust="spacing">117,315,935</text>
<rect x="1955.80" y="1032.5" width="1.3" height="4.5" fill="#333"/>
<text x="1897.50" y="1030.75" font-size="10.0" fill="#111" stroke="#111" stroke-width="0.120" textLength="57.50" lengthAdjust="spacing">117,415,145</text>
<ellipse cx="247" cy="1053" rx="3" ry="1.6" fill="#333"/>
</svg></body></html>
